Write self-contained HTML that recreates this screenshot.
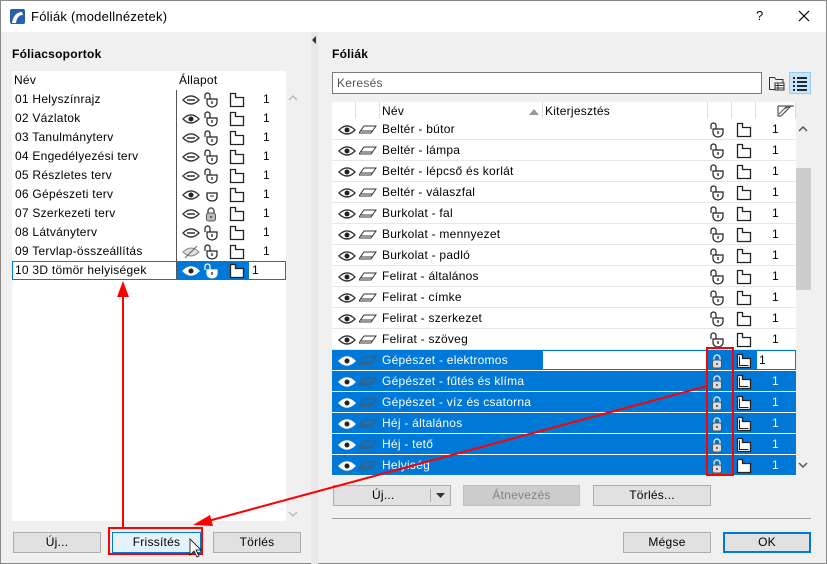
<!DOCTYPE html>
<html><head><meta charset="utf-8">
<style>
*{box-sizing:border-box;margin:0;padding:0}
body{width:827px;height:564px;overflow:hidden;background:#f0f0f0;font-family:"Liberation Sans",sans-serif;font-size:12px;color:#000;position:relative;letter-spacing:0.25px}
.win{position:absolute;left:0;top:0;width:827px;height:564px;border:1px solid #888;background:#f0f0f0}
.title{position:absolute;left:0;top:0;width:825px;height:31px;background:#fff}
.abs{position:absolute}
.btn{position:absolute;height:21px;background:#e1e1e1;border:1px solid #adadad;text-align:center;line-height:19px;font-size:12px}
.row{position:absolute;height:19px;line-height:19px;font-size:12px}
.rrow{position:absolute;left:331px;width:464px;height:20px;line-height:20px;background:#fff}
.sel{background:#0078d7;color:#fff}
svg.i{position:absolute}
</style></head><body>
<div class="win">
<div class="title">
 <svg class="i" style="left:9px;top:8px" width="15" height="15"><rect width="15" height="15" rx="2" fill="#2a5fb0"/><path d="M2 14 Q4 3 12 3 L13 6 Q7 6 6 14Z" fill="#fff"/></svg>
 <div class="abs" style="left:30px;top:8px;font-size:13px">Fóliák (modellnézetek)</div>
 <div class="abs" style="left:755px;top:7px;font-size:13px">?</div>
 <svg class="i" style="left:797px;top:9px" width="12" height="12"><path d="M1 1L11 11M11 1L1 11" stroke="#000" stroke-width="1.2"/></svg>
</div>
<div class="abs" style="left:310px;top:31px;width:7px;height:532px;background:#e8e8e8"></div>
<svg class="i" style="left:310px;top:35px" width="6" height="8"><path d="M5 0L1 4L5 8Z" fill="#333"/></svg>

<div class="abs" style="left:11px;top:46px;font-weight:bold">Fóliacsoportok</div>
<div class="abs" style="left:11px;top:70px;width:274px;height:450px;background:#fff"></div>
<div class="abs" style="left:11px;top:70px;width:274px;height:19px;background:#fff;line-height:19px"><span style="margin-left:2px">Név</span><span class="abs" style="left:167px;top:0">Állapot</span></div>
<div class="abs" style="left:175px;top:89px;width:1px;height:190px;background:#555"></div>
<div id="left"></div>
<svg class="i" style="left:287px;top:93px" width="10" height="8"><path d="M1 6L5 2L9 6" stroke="#bbb" fill="none" stroke-width="1.5"/></svg>
<svg class="i" style="left:287px;top:509px" width="10" height="8"><path d="M1 2L5 6L9 2" stroke="#bbb" fill="none" stroke-width="1.5"/></svg>

<div class="btn" style="left:12px;top:531px;width:88px">Új...</div>
<div class="btn" style="left:111px;top:531px;width:89px;background:#e5f1fb;border-color:#0078d7">Frissítés</div>
<div class="btn" style="left:212px;top:531px;width:88px">Törlés</div>

<div class="abs" style="left:331px;top:46px;font-weight:bold">Fóliák</div>
<div class="abs" style="left:331px;top:71px;width:430px;height:22px;background:#fff;border:1px solid #7a7a7a;line-height:20px;padding-left:4px;color:#555">Keresés</div>
<svg class="i" style="left:767px;top:73px" width="18" height="18"><path d="M1.5 3.5h5l1.5 2h7v10h-13.5z" fill="none" stroke="#333"/><rect x="7" y="9" width="9" height="7" fill="#fff" stroke="#333"/><path d="M7 11.5h9M7 14h9M10 9v7" stroke="#333"/></svg>
<div class="abs" style="left:788px;top:71px;width:22px;height:22px;background:#cce4f7;border:1px solid #99c9ef"></div>
<svg class="i" style="left:790px;top:74px" width="18" height="16"><path d="M2 3h2M6 3h10M2 7h2M6 7h10M2 11h2M6 11h10M2 15h2M6 15h10" stroke="#1a2a3a" stroke-width="2"/></svg>

<div class="abs" style="left:331px;top:101px;width:464px;height:18px;background:#fff;line-height:18px">
 <div class="abs" style="left:23px;top:0;width:1px;height:18px;background:#ddd"></div>
 <div class="abs" style="left:47px;top:0;width:1px;height:18px;background:#ddd"></div>
 <span class="abs" style="left:50px">Név</span>
 <svg class="i" style="left:197px;top:7px" width="10" height="6"><path d="M0 6L5 0L10 6Z" fill="#999"/></svg>
 <div class="abs" style="left:210px;top:0;width:1px;height:18px;background:#ddd"></div>
 <span class="abs" style="left:213px">Kiterjesztés</span>
 <div class="abs" style="left:375px;top:0;width:1px;height:18px;background:#ddd"></div>
 <div class="abs" style="left:399px;top:0;width:1px;height:18px;background:#ddd"></div>
 <div class="abs" style="left:423px;top:0;width:1px;height:18px;background:#ddd"></div>
 <svg class="i" style="left:445px;top:3px" width="18" height="12"><path d="M1 1h16M1 1v10h3l10-10" fill="none" stroke="#333"/><path d="M2 9l8-8M4 11l10-10M7 4l6-3" stroke="#555"/></svg>
 <div class="abs" style="left:463px;top:0;width:1px;height:18px;background:#ddd"></div>
</div>
<div class="abs" style="left:331px;top:119px;width:464px;height:231px;background:#e6e6e6"></div>
<div class="abs" style="left:331px;top:350px;width:464px;height:125px;background:#fff"></div>
<div id="right"></div>
<div class="abs" style="left:795px;top:119px;width:15px;height:356px;background:#f0f0f0"></div>
<div class="abs" style="left:795px;top:167px;width:15px;height:122px;background:#cdcdcd"></div>
<svg class="i" style="left:797px;top:124px" width="10" height="8"><path d="M1 6L5 2L9 6" stroke="#555" fill="none" stroke-width="1.5"/></svg>
<svg class="i" style="left:797px;top:460px" width="10" height="8"><path d="M1 2L5 6L9 2" stroke="#555" fill="none" stroke-width="1.5"/></svg>

<div class="btn" style="left:332px;top:484px;width:118px;text-align:left;padding-left:38px">Új...<span class="abs" style="left:96px;top:3px;width:1px;height:13px;background:#aaa"></span><svg class="i" style="left:102px;top:7px" width="9" height="5"><path d="M0 0h9L4.5 5Z" fill="#333"/></svg></div>
<div class="btn" style="left:462px;top:484px;width:117px;background:#ccc;border-color:#bfbfbf;color:#838383">Átnevezés</div>
<div class="btn" style="left:592px;top:484px;width:118px">Törlés...</div>
<div class="abs" style="left:331px;top:517px;width:479px;height:1px;background:#a0a0a0"></div>
<div class="btn" style="left:622px;top:531px;width:88px">Mégse</div>
<div class="btn" style="left:722px;top:531px;width:88px;border:2px solid #0078d7;line-height:17px">OK</div>
</div>

<svg class="abs" style="left:0;top:0" width="827" height="564">
 <g stroke="#f00" fill="none" stroke-width="2">
  <rect x="109" y="528" width="93" height="26"/>
  <rect x="707" y="348" width="26" height="127"/>
  <line x1="123" y1="527" x2="123" y2="295"/>
  <line x1="707" y1="386" x2="208" y2="521"/>
 </g>
 <path d="M123 281L117 297H129Z" fill="#f00"/>
 <path d="M193 525L210 515L213 526Z" fill="#f00"/>
 <path d="M190 539v16l4-4 3 6 2-1-3-6h5z" fill="#fff" stroke="#000" stroke-width="0.8"/>
</svg>

<script>
function eye(x,y,dim,white){return '<svg class="i" style="left:'+x+'px;top:'+y+'px" width="18" height="12"><path d="M1 6Q9 -2 17 6Q9 14 1 6Z" fill="'+(white?'#fff':'none')+'" stroke="'+(white?'#fff':'#333')+'" stroke-width="1.3"/>'+(dim?'<path d="M5 6h8" stroke="#333" stroke-width="1.5"/>':'<circle cx="9" cy="6" r="2.5" fill="#222"/>')+'</svg>';}
function lock(x,y,type,white){var s='<svg class="i" style="left:'+x+'px;top:'+y+'px" width="16" height="16">';
 if(type=='open')s+='<path d="M2 7V3.5a2.5 2.5 0 0 1 5 0V7" fill="none" stroke="'+(white?'#fff':'#222')+'" stroke-width="1.2"/><path d="M4 7h10v3.5a5 4.5 0 0 1-10 0z" fill="#fff" stroke="'+(white?'#fff':'#222')+'" stroke-width="1.2"/><path d="M9 9v3" stroke="#222" stroke-width="1.3"/>';
 else if(type=='shield')s+='<path d="M4 6h10v4a5 4 0 0 1-10 0z" fill="#fff" stroke="#222" stroke-width="1.3"/><path d="M7 9h4" stroke="#222"/>';
 else s+='<path d="M5 7V5a3 3 0 0 1 6 0v2" fill="none" stroke="'+(white?'#ddd':'#555')+'" stroke-width="1.5"/><rect x="3.5" y="7" width="9" height="8" rx="2" fill="'+(white?'#ddd':'#bbb')+'" stroke="#555"/><path d="M8 10v2" stroke="#444" stroke-width="1.5"/>';
 return s+'</svg>';}
function page(x,y,white,dbl){return '<svg class="i" style="left:'+x+'px;top:'+y+'px" width="16" height="16"><path d="M1.5 1.5h5v4h8v9h-13z" fill="#fff" stroke="#222" stroke-width="1.3"/>'+(dbl?'<path d="M3.5 3.5v9h9" fill="none" stroke="#222"/>':'')+'</svg>';}
function layer(x,y,white){return '<svg class="i" style="left:'+x+'px;top:'+y+'px" width="18" height="10"><path d="M5 1h12l-5 7H0z" fill="none" stroke="'+(white?'#555':'#333')+'"/><path d="M2 6h12" stroke="'+(white?'#555':'#333')+'"/></svg>';}
var L=["01 Helyszínrajz","02 Vázlatok","03 Tanulmányterv","04 Engedélyezési terv","05 Részletes terv","06 Gépészeti terv","07 Szerkezeti terv","08 Látványterv","09 Tervlap-összeállítás"];
var h='';
L.forEach(function(n,i){var y=89+i*19;
 h+='<div class="row" style="left:14px;top:'+y+'px">'+n+'</div>';
 var dim=!(i==1||i==5);
 if(i==8)h+='<svg class="i" style="left:181px;top:'+(y+4)+'px" width="18" height="12"><path d="M1 6Q9 -2 17 6Q9 14 1 6Z" fill="#ddd" stroke="#888"/><path d="M3 12L15 0" stroke="#666"/></svg>';
 else h+=eye(181,y+4,dim);
 h+=lock(202,y+2,i==5?'shield':(i==6?'closed':'open'));
 h+=page(228,y+2);
 h+='<div class="row" style="left:262px;top:'+y+'px">1</div>';
});
h+='<div class="abs" style="left:11px;top:260px;width:274px;height:19px;border:1px solid #0078d7"></div>';
h+='<div class="abs" style="left:176px;top:261px;width:72px;height:17px;background:#0078d7"></div>';
h+='<div class="row" style="left:14px;top:260px">10 3D tömör helyiségek</div>';
h+=eye(181,264,false,true)+lock(202,262,'open',true)+page(228,262,true)+'<div class="row" style="left:251px;top:260px">1</div>';
document.getElementById('left').innerHTML=h;
var R=["Beltér - bútor","Beltér - lámpa","Beltér - lépcső és korlát","Beltér - válaszfal","Burkolat - fal","Burkolat - mennyezet","Burkolat - padló","Felirat - általános","Felirat - címke","Felirat - szerkezet","Felirat - szöveg","Gépészet - elektromos","Gépészet - fűtés és klíma","Gépészet - víz és csatorna","Héj - általános","Héj - tető","Helyiség"];
h='';
R.forEach(function(n,i){var y=118+i*21;var s=i>=11;
 h+='<div class="rrow'+(s?' sel':'')+'" style="top:'+y+'px">'+eye(6,5,false,s)+layer(27,6,s)+'<span class="abs" style="left:50px">'+n+'</span>'+lock(377,3,s?'closed':'open',s)+page(404,3,false,s&&i<16)+(i==11?'<div class="abs" style="left:211px;top:1px;width:164px;height:18px;background:#fff"></div><div class="abs" style="left:425px;top:1px;width:38px;height:18px;background:#fff;color:#000;padding-left:2px;line-height:18px">1</div>':'<span class="abs" style="left:440px">1</span>')+'</div>';
});
document.getElementById('right').innerHTML=h;
</script>
</body></html>
